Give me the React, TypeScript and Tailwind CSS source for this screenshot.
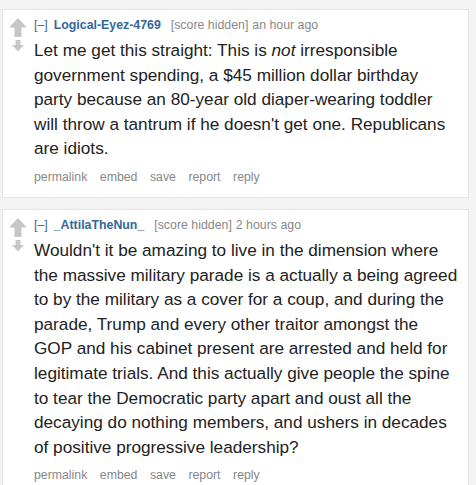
const comments = [
  {
    author: "Logical-Eyez-4769",
    time: "an hour ago",
    body: (
      <>
        Let me get this straight: This is <em>not</em> irresponsible government spending, a $45 million
        dollar birthday party because an 80-year old diaper-wearing toddler will throw a tantrum if he
        doesn't get one. Republicans are idiots.
      </>
    ),
  },
  {
    author: "_AttilaTheNun_",
    time: "2 hours ago",
    body: (
      <>
        Wouldn't it be amazing to live in the dimension where the massive military parade is a actually a
        being agreed to by the military as a cover for a coup, and during the parade, Trump and every
        other traitor amongst the GOP and his cabinet present are arrested and held for legitimate
        trials. And this actually give people the spine to tear the Democratic party apart and oust all
        the decaying do nothing members, and ushers in decades of positive progressive leadership?
      </>
    ),
  },
];

const actions = ["permalink", "embed", "save", "report", "reply"];

function Arrows() {
  return (
    <div className="flex w-[31px] shrink-0 flex-col items-center pt-[8px] pr-[2px]">
      <svg width="18" height="19" viewBox="0 0 18 19">
        <path d="M9 0 L18 9.5 L12.5 9.5 L12.5 19 L5.5 19 L5.5 9.5 L0 9.5 Z" fill="#c6c6c6" />
      </svg>
      <svg width="14" height="12" viewBox="0 0 14 12" className="mt-[3px]">
        <path d="M4.5 0 L9.5 0 L9.5 5 L13 5 L7 11.5 L1 5 L4.5 5 Z" fill="#c6c6c6" />
      </svg>
    </div>
  );
}

export default function App() {
  return (
    <div
      className="min-h-[485px] bg-[#f3f3f3] pt-[9px]"
      style={{ fontFamily: '"Liberation Sans", Arial, sans-serif' }}
    >
      {comments.map((c, i) => (
        <div
          key={i}
          className="mb-[11px] ml-[2px] flex w-[467px] border border-[#e6e6e6] bg-white pb-[11px]"
        >
          <Arrows />
          <div className="pr-[9px]">
            <div className="mt-[7px] flex items-baseline text-[12.35px] leading-[16px]">
              <span className="text-[#369]">[–]</span>
              <span className="ml-[6px] font-bold text-[#369]">{c.author}</span>
              <span className="ml-[10px] text-[#888]">[score hidden]</span>
              <span className="ml-[4px] text-[#888]">{c.time}</span>
            </div>
            <p className="mt-[5px] text-[17.2px] leading-[24.6px] text-[#222]">{c.body}</p>
            <div className="mt-[7px] flex gap-[12.5px] text-[12.3px] leading-[18px] text-[#888]">
              {actions.map((a) => (
                <span key={a}>{a}</span>
              ))}
            </div>
          </div>
        </div>
      ))}
    </div>
  );
}
